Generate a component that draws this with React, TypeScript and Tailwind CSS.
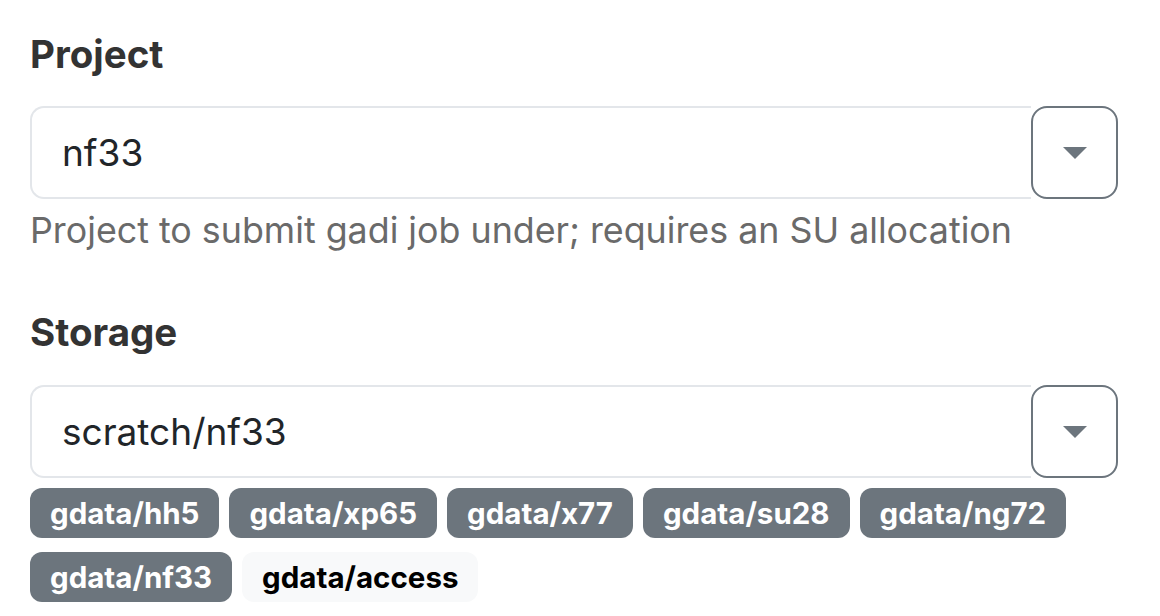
const storage = [
  { name: "gdata/hh5", on: true },
  { name: "gdata/xp65", on: true },
  { name: "gdata/x77", on: true },
  { name: "gdata/su28", on: true },
  { name: "gdata/ng72", on: true },
  { name: "gdata/nf33", on: true },
  { name: "gdata/access", on: false },
];

function Caret() {
  return (
    <svg width="24" height="12" viewBox="0 0 24 12">
      <path d="M0 0 L24 0 L12 12 Z" fill="#6c757d" />
    </svg>
  );
}

function SelectField({ value }: { value: string }) {
  return (
    <div className="flex h-[93px]">
      <div className="flex flex-1 items-center rounded-l-[14px] border-2 border-r-0 border-[#e3e6ea] bg-white pl-[30px] text-[37px] text-[#212529]">
        {value}
      </div>
      <button className="flex w-[87px] items-center justify-center rounded-[16px] border-2 border-[#6c757d] bg-white">
        <Caret />
      </button>
    </div>
  );
}

export default function App() {
  return (
    <div className="h-[616px] w-[1160px] bg-white pl-[30px] pr-[42px] pt-[30px] font-['Inter',sans-serif]">
      <label className="block text-[38.5px] font-bold leading-[48px] text-[#333]">Project</label>
      <div className="mt-[28px]">
        <SelectField value="nf33" />
      </div>
      <p className="mt-[9px] text-[35.8px] leading-[44px] text-[#6a6a6a]">
        Project to submit gadi job under; requires an SU allocation
      </p>

      <label className="mt-[56px] block text-[38.5px] font-bold leading-[48px] text-[#333]">Storage</label>
      <div className="mt-[29px]">
        <SelectField value="scratch/nf33" />
      </div>
      <div className="mt-[10px] flex flex-wrap gap-x-[10px] gap-y-[14px]">
        {storage.map((s) => (
          <span
            key={s.name}
            className={
              s.on
                ? "flex h-[50px] items-center rounded-[12px] bg-[#6c757d] px-[20px] text-[29.5px] font-bold text-white"
                : "flex h-[50px] items-center rounded-[12px] bg-[#f8f9fa] px-[20px] text-[29.5px] font-bold text-black"
            }
          >
            {s.name}
          </span>
        ))}
      </div>
    </div>
  );
}
